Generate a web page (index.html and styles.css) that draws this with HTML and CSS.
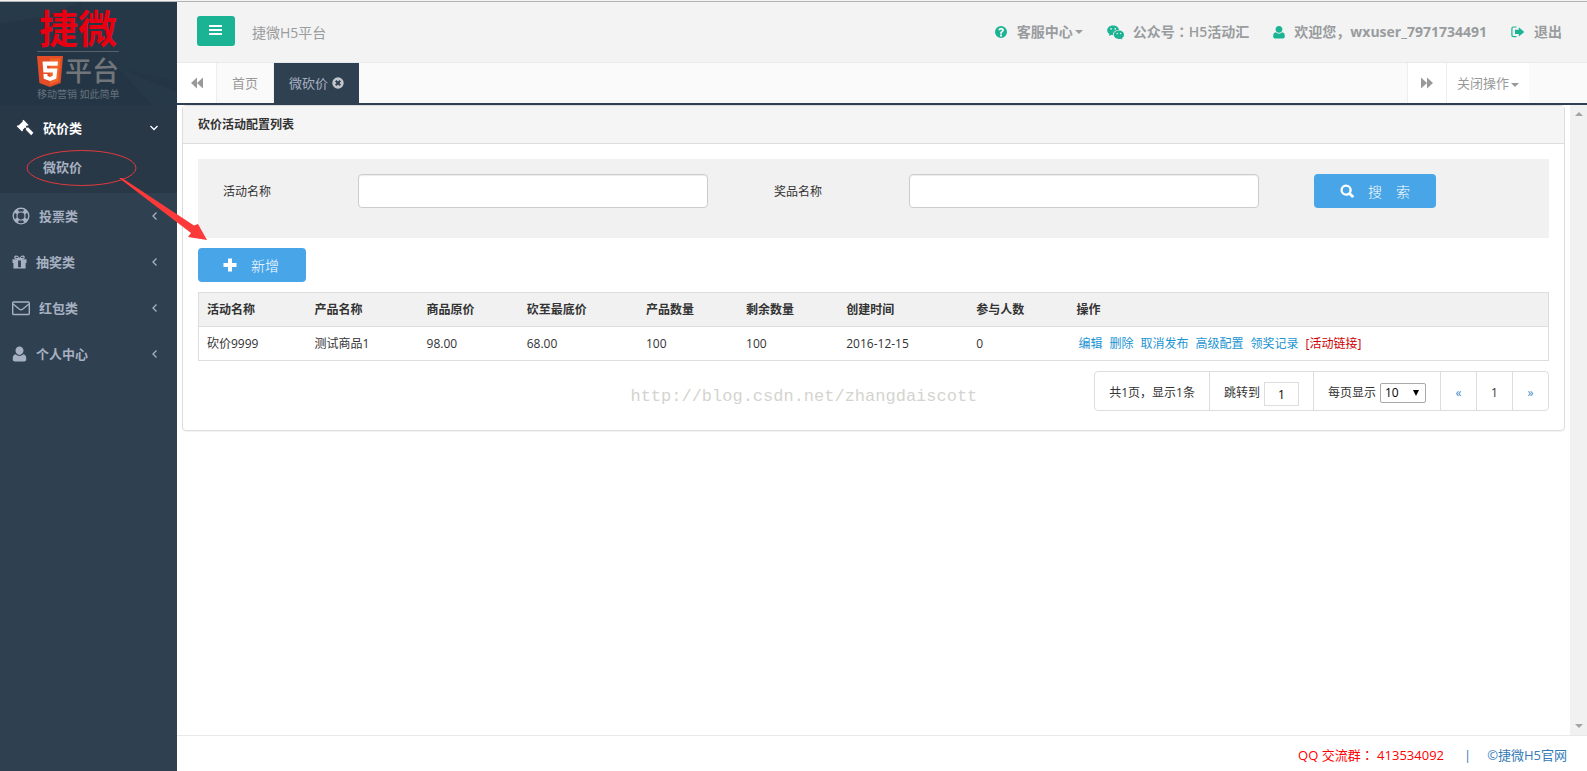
FILE: index.html
```html
<!DOCTYPE html>
<html lang="zh-CN">
<head>
<meta charset="utf-8">
<title>捷微H5平台</title>
<link rel="stylesheet" href="styles.css">
</head>
<body>
<div class="app">
  <aside class="sidebar">
    <div class="brand">
      <svg class="facets" viewBox="0 0 177 103" preserveAspectRatio="none" aria-hidden="true">
        <path d="M0 0H80L48 14 0 22Z" fill="#273a4a"/>
        <path d="M80 0H177V80L118 66 96 40Z" fill="#253848"/>
        <path d="M118 66L177 90V103H152Z" fill="#263949"/>
      </svg>
      <div class="brand-top">捷微</div>
      <div class="brand-mid">
        <svg class="html5" viewBox="0 0 26 31" aria-hidden="true">
          <path d="M0 0H26L23.600 27 13 31 2.400 27Z" fill="#e44d26"/>
          <path d="M13 2.500H23.500L21.500 25.300 13 28.500Z" fill="#f16529"/>
          <path d="M5.500 5.500H21L20.600 9.700H10L10.200 12.400H20.400L19.300 22.800 13 25 6.800 22.800 6.400 18H10.400L10.600 19.900 13 20.900 15.600 19.900 15.900 16.400H6.400Z" fill="#fff"/>
        </svg>
        <span>平台</span>
      </div>
      <div class="brand-sub">移动营销 如此简单</div>
    </div>
    <nav>
      <div class="group open">
        <a class="item" href="#">
          <svg class="i18" viewBox="0 0 18 18"><path d="M7.500 0.800L12.600 5.900 11.700 6.800 10.900 6.600 9.700 7.800 10.900 9 12 8.300 17.400 13.700 15.200 16.200 9.800 10.700 10.300 9.800 9 8.500 6.800 10.700 7 11.500 6 12.500 0.700 7.200 1.700 6.200 2.500 6.500 6.700 2.500 6.500 1.700Z"/></svg>
          <span>砍价类</span>
          <svg class="chev" viewBox="0 0 10 10"><path d="M1.500 3L5 6.500 8.500 3"/></svg>
        </a>
        <a class="sub" href="#">微砍价</a>
      </div>
      <a class="item" href="#">
        <svg class="i18" viewBox="0 0 18 18"><path fill-rule="evenodd" d="M9 0.500A8.500 8.500 0 1 0 9 17.500 8.500 8.500 0 1 0 9 0.500ZM9 1.900C10.200 1.900 11.300 2.200 12.300 2.700L10.700 4.700A4.500 4.500 0 0 0 7.300 4.700L5.700 2.700C6.700 2.200 7.800 1.900 9 1.900ZM2.700 5.700L4.700 7.300A4.500 4.500 0 0 0 4.700 10.700L2.700 12.300A7 7 0 0 1 2.700 5.700ZM15.300 5.700A7 7 0 0 1 15.300 12.300L13.300 10.700A4.500 4.500 0 0 0 13.300 7.300ZM9 5.600A3.400 3.400 0 1 1 9 12.400 3.400 3.400 0 1 1 9 5.600ZM5.700 15.300L7.300 13.300A4.500 4.500 0 0 0 10.700 13.300L12.300 15.300A7 7 0 0 1 5.700 15.300Z"/></svg>
        <span>投票类</span>
        <svg class="chev" viewBox="0 0 10 10"><path d="M6.500 1.500L3 5 6.500 8.500"/></svg>
      </a>
      <a class="item" href="#">
        <svg class="i15" viewBox="0 0 16 16"><path fill-rule="evenodd" d="M0.500 5H6.300L3.700 4.700C1.500 4 2 1 4.500 1 6 1 7 2.200 8 3.600 9 2.200 10 1 11.500 1 14 1 14.500 4 12.300 4.700L9.700 5H15.500V9H14.500V15H1.500V9H0.500ZM4.600 2.300C3.500 2.300 3.500 3.700 4.600 3.800H6.700C6 2.800 5.300 2.300 4.600 2.300ZM11.400 2.300C10.700 2.300 10 2.800 9.300 3.800H11.400C12.500 3.700 12.500 2.300 11.400 2.300ZM6.500 6.500V13.500H9.500V6.500Z"/></svg>
        <span>抽奖类</span>
        <svg class="chev" viewBox="0 0 10 10"><path d="M6.500 1.500L3 5 6.500 8.500"/></svg>
      </a>
      <a class="item" href="#">
        <svg class="i18" viewBox="0 0 18 18"><g class="line"><rect x="0.700" y="3" width="16.600" height="12.500" rx="1"/><path d="M1 5L7.500 10.200Q9 11.300 10.500 10.200L17 5"/></g></svg>
        <span>红包类</span>
        <svg class="chev" viewBox="0 0 10 10"><path d="M6.500 1.500L3 5 6.500 8.500"/></svg>
      </a>
      <a class="item" href="#">
        <svg class="i15" viewBox="0 0 14 16"><path d="M7 0.500C9.400 0.500 11 2.300 11 4.600S9.400 9 7 9 3 7 3 4.600 4.600 0.500 7 0.500ZM3.200 8.300C5.500 10.500 8.500 10.500 10.800 8.300 13 8.500 13.800 10.500 13.800 13 13.800 14.800 12.800 15.500 11.500 15.500H2.500C1.200 15.500 0.200 14.800 0.200 13 0.200 10.500 1 8.500 3.200 8.300Z"/></svg>
        <span>个人中心</span>
        <svg class="chev" viewBox="0 0 10 10"><path d="M6.500 1.500L3 5 6.500 8.500"/></svg>
      </a>
    </nav>
  </aside>

  <div class="main">
    <header class="topbar">
      <button class="burger" type="button" aria-label="菜单"><svg viewBox="0 0 14 12"><path d="M0 0H13V2H0ZM0 4H13V6H0ZM0 8H13V10H0Z"/></svg></button>
      <span class="site">捷微H5平台</span>
      <ul class="links">
        <li><a href="#"><svg class="t14" viewBox="0 0 14 14"><path fill-rule="evenodd" d="M7 1A6 6 0 1 0 7 13 6 6 0 1 0 7 1ZM6 9.600H8V11.400H6ZM4.300 4.900C4.700 3.500 5.700 2.700 7.200 2.700 8.800 2.700 10 3.700 10 5.100 10 6.300 9.300 6.800 8.600 7.300 8.100 7.600 8 7.900 8 8.700H6C6 7.300 6.400 6.700 7.200 6.200 7.700 5.900 7.900 5.600 7.900 5.200 7.900 4.400 6.500 4.200 6 5.500Z"/></svg><span>客服中心</span><i class="caret"></i></a></li>
        <li><a href="#"><svg class="t16" viewBox="0 0 16 14"><path fill-rule="evenodd" d="M5.800 0.500C9 0.500 11 2.300 11.400 4.600 8 4.600 5.300 6.600 5.600 9.700L3.800 9.400 1.800 10.400 2.300 8.700C-1.500 6 0 0.500 5.800 0.500ZM3.800 2.700A0.800 0.800 0 1 0 3.800 4.300 0.800 0.800 0 1 0 3.800 2.700ZM7.700 2.700A0.800 0.800 0 1 0 7.700 4.300 0.800 0.800 0 1 0 7.700 2.700Z"/><path fill-rule="evenodd" d="M11.200 5.200C14 5.200 16 7 16 9.100 16 10.500 15.200 11.600 14.100 12.300L14.500 13.700 12.900 12.800C9.500 13.700 6.400 11.800 6.400 9.100 6.400 6.900 8.500 5.200 11.200 5.200ZM9.600 7.200A0.700 0.700 0 1 0 9.600 8.600 0.700 0.700 0 1 0 9.600 7.200ZM12.800 7.200A0.700 0.700 0 1 0 12.800 8.600 0.700 0.700 0 1 0 12.800 7.200Z"/></svg><span>公众号<span class="mid" lang="zh-TW">：</span>H5活动汇</span></a></li>
        <li><a href="#"><svg class="t12" viewBox="0 0 14 16"><path d="M7 1C9.400 1 11 2.700 11 4.900S9.400 9 7 9 3 7 3 4.900 4.600 1 7 1ZM3.200 8.300C5.500 10.500 8.500 10.500 10.800 8.300 13 8.500 13.800 10.500 13.800 13 13.800 14.800 12.800 15.500 11.500 15.500H2.500C1.200 15.500 0.200 14.800 0.200 13 0.200 10.500 1 8.500 3.200 8.300Z"/></svg><span>欢迎您，<b>wxuser_7971734491</b></span></a></li>
        <li><a href="#"><svg class="t14" viewBox="0 0 14 14"><path d="M5.500 1.500V2.600H2.800C1.800 2.600 1.500 3 1.500 4V9.500C1.500 10.500 1.800 11 2.800 11H5.500V12.200H2.800C1 12.200 0.300 11.400 0.300 9.700V4C0.300 2.300 1 1.500 2.800 1.500ZM7.800 2.300L13.300 6.900 7.800 11.500V9H4V4.800H7.800Z"/></svg><span>退出</span></a></li>
      </ul>
    </header>

    <div class="tabs">
      <button class="roll left" type="button" aria-label="向左"><svg viewBox="0 0 14 12"><path d="M7 0.500V11.500L1 6ZM13 0.500V11.500L7 6Z"/></svg></button>
      <a class="tab" href="#">首页</a>
      <a class="tab active" href="#">微砍价<svg viewBox="0 0 12 12"><path fill-rule="evenodd" d="M6 0.300A5.700 5.700 0 1 0 6 11.700 5.700 5.700 0 1 0 6 0.300ZM4.400 3L6 4.600 7.600 3 9 4.400 7.400 6 9 7.600 7.600 9 6 7.400 4.400 9 3 7.600 4.600 6 3 4.400Z"/></svg></a>
      <button class="roll right" type="button" aria-label="向右"><svg viewBox="0 0 14 12"><path d="M1 0.500L7 6 1 11.500ZM7 0.500L13 6 7 11.500Z"/></svg></button>
      <button class="closer" type="button">关闭操作<i class="caret"></i></button>
    </div>

    <div class="frame">
      <main class="page">
        <section class="card">
          <h1 class="card-title">砍价活动配置列表</h1>
          <div class="card-body">
            <form class="search">
              <label for="act">活动名称</label>
              <input id="act" type="text">
              <label class="second" for="prize">奖品名称</label>
              <input id="prize" type="text">
              <button class="btn find" type="button"><svg viewBox="0 0 16 16"><path fill-rule="evenodd" d="M6.500 0.500A6 6 0 1 0 9.700 11.600L13 15 15.300 13 11.700 9.500A6 6 0 0 0 6.500 0.500ZM6.500 2.900A3.600 3.600 0 1 1 6.500 10.100 3.600 3.600 0 1 1 6.500 2.900Z"/></svg><span>搜</span><span>索</span></button>
            </form>
            <button class="btn add" type="button"><svg viewBox="0 0 14 14"><path d="M5 0.500H9V5H13.500V9H9V13.500H5V9H0.500V5H5Z"/></svg><span>新增</span></button>
            <table class="grid">
              <colgroup><col class="c8"><col class="c83"><col class="c74"><col class="c88"><col class="c74"><col class="c74"><col class="c96"><col class="c74"><col></colgroup>
              <thead><tr><th>活动名称</th><th>产品名称</th><th>商品原价</th><th>砍至最底价</th><th>产品数量</th><th>剩余数量</th><th>创建时间</th><th>参与人数</th><th>操作</th></tr></thead>
              <tbody><tr><td>砍价9999</td><td>测试商品1</td><td>98.00</td><td>68.00</td><td>100</td><td>100</td><td>2016-12-15</td><td>0</td><td><div class="ops"><a href="#">编辑</a><a href="#">删除</a><a href="#">取消发布</a><a href="#">高级配置</a><a href="#">领奖记录</a><a class="red" href="#">[活动链接]</a></div></td></tr></tbody>
            </table>
            <div class="pager">
              <div class="seg">共1页，显示1条</div>
              <div class="seg"><label for="jump">跳转到</label><input id="jump" type="text" value="1"></div>
              <div class="seg"><label for="size">每页显示</label><span class="pick"><select id="size"><option>10</option></select></span></div>
              <a class="seg num arrow" href="#">«</a>
              <a class="seg num" href="#">1</a>
              <a class="seg num arrow" href="#">»</a>
            </div>
          </div>
          <div class="watermark">http://blog.csdn.net/zhangdaiscott</div>
        </section>
      </main>
      <div class="scroll" aria-hidden="true"><i class="up"></i><i class="down"></i></div>
    </div>

    <footer class="footer"><span class="qq">QQ 交流群<span class="mid" lang="zh-TW">：</span> 413534092</span><span class="bar">|</span><a href="#">©捷微H5官网</a></footer>
  </div>

  <svg class="note" viewBox="0 0 220 250" width="220" height="250" aria-hidden="true">
    <ellipse cx="81.500" cy="168" rx="54.500" ry="17.500" fill="none" stroke="#e03a3e"/>
    <path d="M119 178L122 178 194 225.500 198 224 207 240 188 237 191 233Z" fill="#fd3a3a"/>
  </svg>
</div>
</body>
</html>
```
FILE: styles.css
```css
* { box-sizing: border-box; }

body {
  margin: 0;
  font: 12px/18px "Open Sans", "Noto Sans CJK SC", sans-serif;
  color: #333;
  background: #fff;
}

a { color: inherit; text-decoration: none; }
button, input, select { font: inherit; }
button { border: 0; padding: 0; cursor: pointer; }
svg { display: block; fill: currentColor; flex: none; }
.mid { font-family: "Noto Sans CJK TC", sans-serif; line-height: 1; }

.app {
  position: relative;
  display: flex;
  min-height: 100vh;
  border-top: 1px solid #f4f4f4;
  box-shadow: inset 0 1px #b0b3b3;
  padding-top: 1px;
}

/* sidebar */
.sidebar { width: 177px; flex: none; background: #2f4050; color: #a7b1c2; }

.brand {
  position: relative;
  height: 103px;
  padding: 7px 0 0 37px;
  background: #243646;
}
.facets { position: absolute; inset: 0; width: 100%; height: 100%; }
.brand-top, .brand-mid, .brand-sub { position: relative; }
.brand-top {
  width: 82px;
  height: 43px;
  border-bottom: 1px solid #56616c;
  color: #e60012;
  font-size: 39px;
  line-height: 38px;
  font-weight: 700;
  text-align: center;
}
.brand-mid {
  display: flex;
  align-items: center;
  gap: 2px;
  height: 34px;
  margin-top: 2px;
  color: #72767a;
  font-size: 27px;
  font-weight: 500;
}
.html5 { width: 26px; height: 31px; }
.brand-sub { color: #66717b; font-size: 10px; line-height: 12px; white-space: nowrap; }

.group { height: 88px; background: #293846; }
.item {
  display: flex;
  align-items: center;
  gap: 9px;
  height: 46px;
  padding: 0 17px 0 12px;
  font-size: 13px;
  font-weight: 600;
}
.open .item { padding-left: 16px; padding-right: 18px; color: #fff; }
.sub { display: block; padding: 7px 0 0 43px; font-size: 13px; font-weight: 600; }
.i18 { width: 18px; height: 18px; }
.i15 { width: 15px; height: 16px; }
.line { fill: none; stroke: currentColor; stroke-width: 1.4; }
.chev { width: 10px; height: 10px; margin-left: auto; fill: none; stroke: currentColor; stroke-width: 1.3; }

/* header */
.main { flex: 1; min-width: 0; display: flex; flex-direction: column; }
.topbar {
  display: flex;
  align-items: center;
  height: 61px;
  padding: 0 25px 2px 20px;
  background: #f3f3f3;
  border-bottom: 1px solid #e7eaec;
  color: #999c9e;
}
.burger {
  display: grid;
  place-items: center;
  width: 38px;
  height: 30px;
  border-radius: 3px;
  background: #1ab394;
  color: #fff;
}
.burger svg { width: 14px; height: 12px; }
.site { margin-left: 17px; font-size: 14px; line-height: 20px; padding-top: 3px; }
.links {
  display: flex;
  gap: 24px;
  margin: 0 0 0 auto;
  padding: 2px 0 0;
  list-style: none;
  font-size: 14px;
  line-height: 20px;
  font-weight: 600;
}
.links a { display: flex; align-items: center; }
.links svg { margin-right: 9px; color: #1ab394; }
.links b { font-weight: 700; }
.t16 { width: 17px; height: 15px; }
.t14 { width: 14px; height: 14px; }
.t12 { width: 12px; height: 14px; }
.caret {
  display: inline-block;
  margin-left: 2px;
  vertical-align: middle;
  border: 4px solid transparent;
  border-top-color: currentColor;
  border-bottom: 0;
}

/* tab strip */
.tabs {
  display: flex;
  height: 42px;
  padding-right: 58px;
  background: #fafafa;
  border-bottom: 2px solid #2f4050;
  color: #999;
  font-size: 13px;
}
.roll { display: grid; place-items: center; width: 40px; background: #fff; color: #999; }
.roll svg { width: 14px; height: 12px; }
.left { border-right: 1px solid #eee; }
.right { margin-left: auto; border: solid #eee; border-width: 0 1px; }
.tab { display: flex; align-items: center; padding: 0 15px; border-right: 1px solid #eee; }
.active { gap: 4px; border: 0; background: #2f4050; color: #a7b1c2; }
.active svg { width: 12px; height: 12px; color: #c3c7cc; }
.closer { padding: 0 10px; background: #fff; color: #999; }

/* framed page */
.frame { flex: 1; display: flex; }
.page { flex: 1; min-width: 0; padding: 0 5px; }
.scroll {
  display: flex;
  flex-direction: column;
  justify-content: space-between;
  align-items: center;
  width: 17px;
  padding: 7px 0;
  background: #f1f1f1;
  color: #a3a3a3;
}
.up, .down { border: 4px solid transparent; }
.up { border-bottom-color: currentColor; border-top: 0; }
.down { border-top-color: currentColor; border-bottom: 0; }

.card {
  position: relative;
  border: 1px solid #ddd;
  border-radius: 4px;
  box-shadow: 0 1px 1px rgba(0, 0, 0, 0.05);
}
.card-title {
  margin: 0;
  padding: 10px 15px 9px;
  background: #f5f5f5;
  border-bottom: 1px solid #ddd;
  font-size: 12px;
  line-height: 18px;
  font-weight: 600;
}
.card-body { padding: 15px 15px 19px; }

.search {
  display: grid;
  grid-template-columns: 135fr 350fr 201fr 350fr 290fr;
  padding: 15px 0 30px 25px;
  background: #f1f1f1;
}
.search label { align-self: center; padding-top: 2px; }
.search .second { padding-left: 66px; }
.search input {
  width: 100%;
  height: 34px;
  border: 1px solid #ccc;
  border-radius: 4px;
  background: #fff;
  box-shadow: inset 0 1px 1px rgba(0, 0, 0, 0.075);
  padding: 6px 12px;
}
.btn {
  display: flex;
  align-items: center;
  gap: 14px;
  height: 34px;
  border-radius: 4px;
  background: #48a6e8;
  color: #fff;
  font-size: 14px;
  font-weight: 300;
}
.btn svg { width: 14px; height: 14px; }
.btn span { padding-top: 2px; }
.find { width: 122px; padding-left: 26px; margin-left: 55px; }
.find svg { width: 15px; height: 15px; margin-right: -1px; }
.add { width: 108px; padding-left: 25px; margin: 10px 0; }

.grid { width: 100%; border-collapse: collapse; border: 1px solid #ddd; table-layout: fixed; }
.grid th, .grid td { height: 34px; padding: 0 8px; text-align: left; border-bottom: 1px solid #ddd; white-space: nowrap; }
.grid th { background: #f1f1f1; font-weight: 600; }
.c8 { width: 8%; }
.c83 { width: 8.300%; }
.c74 { width: 7.420%; }
.c88 { width: 8.830%; }
.c96 { width: 9.630%; }
.ops { display: flex; gap: 7px; padding-left: 2px; color: #1a94d2; }
.red { color: #c00; }

.pager {
  display: flex;
  width: max-content;
  height: 40px;
  margin: 10px 0 0 auto;
  border: 1px solid #ddd;
  border-radius: 4px;
}
.seg { display: flex; align-items: center; gap: 4px; padding: 3px 14px 0; }
.seg + .seg { border-left: 1px solid #ddd; }
.seg.num { width: 36px; padding: 3px 0 0; justify-content: center; }
.seg.arrow { color: #428bca; }
#jump { width: 35px; height: 24px; margin-top: 3px; padding: 0; border: 1px solid #ddd; text-align: center; }
.pick { position: relative; }
.pick::after {
  content: "";
  position: absolute;
  right: 7px;
  top: 7px;
  border: 3px solid transparent;
  border-top: 6px solid #000;
  border-bottom: 0;
}
#size {
  display: block;
  width: 46px;
  height: 20px;
  padding: 0 4px;
  appearance: none;
  border: 1px solid #a9a9a9;
  border-radius: 2px;
  background: #fff;
  color: #000;
}

.watermark {
  position: absolute;
  left: 32.400%;
  bottom: 21px;
  color: #d4d4cf;
  font: 17px/24px "Liberation Mono", monospace;
}

.footer {
  display: flex;
  align-items: center;
  justify-content: flex-end;
  height: 36px;
  padding: 2px 20px 0 0;
  border-top: 1px solid #e7eaec;
  font-size: 13px;
}
.qq { color: #f00; }
.bar { margin: 0 16px 0 20px; color: #337ab7; }
.footer a { color: #337ab7; }

.note { position: absolute; left: 0; top: -1px; pointer-events: none; }
```
